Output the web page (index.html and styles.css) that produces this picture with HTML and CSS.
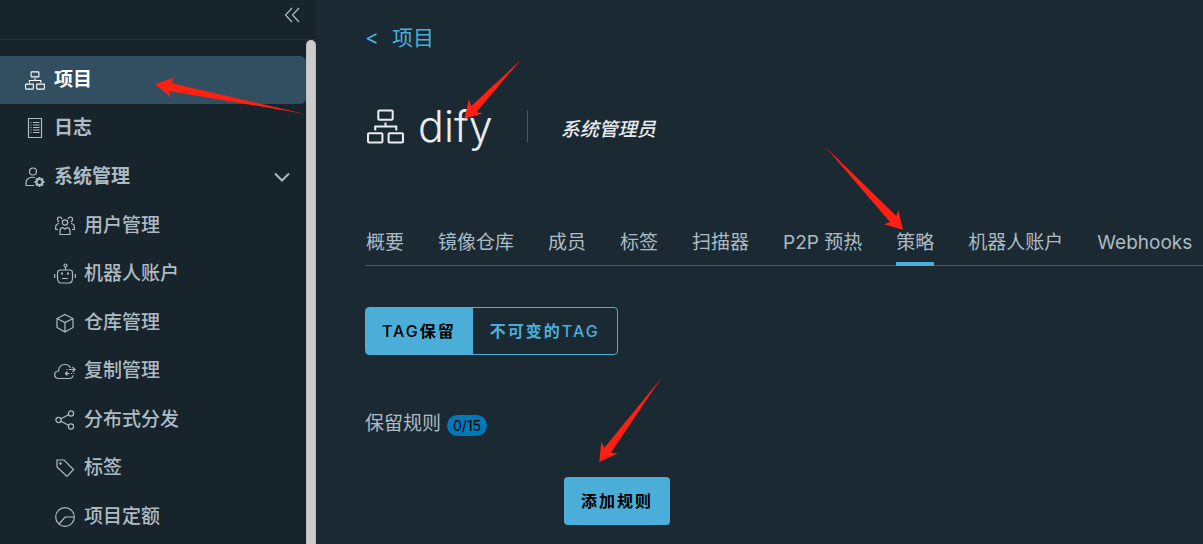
FILE: index.html
```html
<!DOCTYPE html>
<html lang="zh-CN">
<head>
<meta charset="utf-8">
<title>dify - 策略</title>
<link rel="stylesheet" href="styles.css">
</head>
<body>
<svg class="sprite" aria-hidden="true">
  <symbol id="project" viewBox="0 0 36 34">
    <path d="M12 1.5h12a1 1 0 0 1 1 1v7a1 1 0 0 1-1 1H12a1 1 0 0 1-1-1v-7a1 1 0 0 1 1-1zM2 23.500h12a1 1 0 0 1 1 1v7a1 1 0 0 1-1 1H2a1 1 0 0 1-1-1v-7a1 1 0 0 1 1-1zM22 23.500h12a1 1 0 0 1 1 1v7a1 1 0 0 1-1 1H22a1 1 0 0 1-1-1v-7a1 1 0 0 1 1-1zM18 13v4M8 21v-4h20.500v4"/>
  </symbol>
</svg>
<div class="app">
  <aside class="sidebar">
    <div class="sidebar-head">
      <button class="collapse" aria-label="收起"><svg width="16" height="16" viewBox="0 0 16 16"><path d="M8 1 1.500 8 8 15M15 1 8.500 8 15 15"/></svg></button>
    </div>
    <div class="sidebar-body">
      <nav class="nav">
        <a class="item active" href="#"><svg class="icon small-project"><use href="#project"/></svg>项目</a>
        <a class="item" href="#"><svg class="icon" viewBox="0 0 20 20"><path d="M3.500 .5h13v19h-13z"/><path d="M5.500 4.500h1M8 4.500h6.500M5.500 7h1M8 7h6.500M5.500 9.500h1M8 9.500h6.500M5.500 12h1M8 12h6.500M5.500 14.500h1M8 14.500h6.500"/></svg>日志</a>
        <button class="item" aria-expanded="true"><svg class="icon" viewBox="0 0 20 20"><circle cx="8" cy="4.500" r="3.500"/><path d="M10 10.500C5 9.500 1 12 1 15.500V18.500H9"/><circle cx="14.500" cy="15" r="3" stroke-width="2"/><path d="M14.500 10v2M14.500 18v2M9.500 15h2M17.500 15h2M11 11.500l1.400 1.400M16.600 17.100l1.400 1.400M18 11.500l-1.400 1.400M12.400 17.100 11 18.500" stroke-width="2"/></svg>系统管理<svg class="chevron" width="16" height="10" viewBox="0 0 16 10"><path d="M1 1.500l7 7 7-7"/></svg></button>
        <div class="sub">
          <a class="item" href="#"><svg class="icon" viewBox="0 0 20 20"><circle cx="10" cy="6.500" r="2.700"/><path d="M5 18.500v-3.500q0-3 2.500-3.500L10 13l2.500-1.500q2.500.5 2.500 3.500v3.500zM7 3Q6.500 1 4.500 1 2.500 1 2.500 3.500 2.500 5 4 6M13 3Q13.500 1 15.500 1 17.500 1 17.500 3.500 17.500 5 16 6M4 7.500Q.7 8 .7 11v2.500H3M16 7.500Q19.300 8 19.300 11v2.500H17"/></svg>用户管理</a>
          <a class="item" href="#"><svg class="icon wide" viewBox="0 0 22 22"><circle cx="11.500" cy="2.500" r="1.500"/><path d="M11.500 4v3M6.500 7h9.500q2.500 0 2.500 3v5q0 5-3.500 5H7.500Q3.500 20 3.500 15v-5q0-3 3-3zM.7 11v4M21.300 11v4M8 15.500h6"/><path d="M7 10.500h2M13 10.500h2" stroke-width="2"/></svg>机器人账户</a>
          <a class="item" href="#"><svg class="icon" viewBox="0 0 20 20"><path d="M10 1.500 18 5.500v9L10 19l-8-4.500v-9zM2 5.500l8 4 8-4M10 9.500V19"/></svg>仓库管理</a>
          <a class="item" href="#"><svg class="icon wide" viewBox="0 0 22 22"><path d="M19 15.500q-.5 3-4 3H4Q.7 18 .7 14.500 .7 11.500 4.500 11 5 4.500 11 4.500q4 0 5.500 3.500M12.500 9.500h1M15 9.500h6M18.500 7l2.500 2.500-2.500 2.500M11.500 13.500h4M17 13.500h1M19.500 13.500h1M13.500 11.500l-2 2 2 2"/></svg>复制管理</a>
          <a class="item" href="#"><svg class="icon" viewBox="0 0 20 20"><circle cx="3.500" cy="10" r="2.600"/><circle cx="16" cy="3.500" r="2.600"/><circle cx="16" cy="16.500" r="2.600"/><path d="M6 8.800l7.500-4M6 11.200l7.500 4"/></svg>分布式分发</a>
          <a class="item" href="#"><svg class="icon" viewBox="0 0 20 20"><path d="M2 2h7l9.500 9.500-6.500 7L2 9z"/><circle cx="5.500" cy="5.500" r=".7"/></svg>标签</a>
          <a class="item" href="#"><svg class="icon" viewBox="0 0 20 20"><circle cx="10" cy="10" r="9.300"/><path d="M19 10h-9L4 17"/></svg>项目定额</a>
        </div>
      </nav>
      <div class="scrollbar"></div>
    </div>
  </aside>
  <main class="main">
    <a class="back" href="#"><span>&lt;</span><span>项目</span></a>
    <header class="title">
      <svg class="title-icon"><use href="#project"/></svg>
      <h1>dify</h1>
      <em class="role">系统管理员</em>
    </header>
    <nav class="tabs">
      <a href="#">概要</a><a href="#">镜像仓库</a><a href="#">成员</a><a href="#">标签</a><a href="#">扫描器</a><a href="#">P2P 预热</a><a class="current" href="#">策略</a><a href="#">机器人账户</a><a href="#">Webhooks</a>
    </nav>
    <div class="group"><button class="on"><span class="latin">TAG</span>保留</button><button>不可变的<span class="latin">TAG</span></button></div>
    <div class="rules"><span>保留规则</span><span class="badge">0/15</span></div>
    <button class="add">添加规则</button>
  </main>
</div>
<svg class="arrows" aria-hidden="true">
  <path d="M155 84 174.700 77.500 170.700 83 304 113.700 168.700 91 170.700 97.300z"/>
  <path d="M464.300 118.700 469 99.300 471.300 106 520.700 60 476.300 112.300 483.300 113.300z"/>
  <path d="M903 229.700 898.300 210.300 896.300 216 825.700 147.300 890 222 884 224.300z"/>
  <path d="M599.300 462 601.300 441.700 604.300 448 661.300 378 610.700 453 618 453.300z"/>
</svg>
</body>
</html>
```
FILE: styles.css
```css
* { box-sizing: border-box; }
body {
  margin: 0;
  background: #1b2a32;
  color: #adbbc4;
  font-family: Inter, "Noto Sans CJK SC", sans-serif;
  font-size: 19px;
  line-height: 24px;
}
a { color: inherit; text-decoration: none; }
button { font: inherit; color: inherit; background: none; border: 0; padding: 0; cursor: pointer; }
svg { fill: none; stroke: currentColor; flex: none; }
.sprite { position: absolute; width: 0; height: 0; }
.app { display: flex; height: 100vh; overflow: hidden; }

.sidebar { width: 316px; flex: none; display: flex; flex-direction: column; background: #18242b; }
.sidebar-head {
  height: 40px;
  flex: none;
  display: flex;
  justify-content: flex-end;
  align-items: flex-start;
  padding: 7px 16px;
  border-bottom: 1px solid #23323a;
}
.collapse { display: flex; }
.collapse svg { stroke-width: 1.2; }
.sidebar-body { flex: 1; min-height: 0; display: flex; }
.nav { flex: 1; padding-top: 16px; overflow: hidden; }
.scrollbar { width: 10px; background: #cbcbcb; border: 1px solid #bdbdbd; border-width: 0 1px; border-radius: 5px 5px 0 0; }
.item {
  display: flex;
  align-items: center;
  gap: 9px;
  width: 100%;
  height: 48px;
  padding: 0 16px 0 25px;
  font-weight: 700;
  text-align: left;
}
.item.active { background: #324f62; color: #fff; border-radius: 0 6px 6px 0; }
button.item { margin-top: 1px; }
.icon { width: 20px; height: 20px; stroke-width: 1.2; }
.small-project { height: 19px; stroke-width: 2; }
.chevron { margin-left: auto; stroke-width: 2; }
.sub .item { padding-left: 55px; font-weight: 500; }
.sub .item:nth-child(odd) { margin-top: 1px; }
.icon.wide { width: 22px; height: 22px; margin: 0 -1px; }

.main { flex: 1; min-width: 0; padding: 26px 0 0 49px; overflow: hidden; }
.back { display: flex; gap: 13px; width: max-content; color: #4aaed9; font-size: 21px; }
.title { display: flex; align-items: center; height: 48px; margin-top: 52px; color: #e9ecef; }
.title-icon { width: 37px; height: 35px; margin: 0 14px 0 2px; stroke-width: 2; }
h1 { margin: 0; font-size: 43px; font-weight: 300; line-height: 48px; }
.role { margin-left: 34px; padding: 8px 0 0 33px; border-left: 1px solid #495865; font-weight: 500; line-height: 24px; }
.tabs { display: flex; gap: 34px; margin-top: 76px; padding-left: 1px; height: 40px; box-shadow: inset 0 -1px #495865; white-space: nowrap; }
.tabs a { flex: none; padding-top: 5px; border-bottom: 4px solid transparent; }
.tabs .current { border-color: #4aaed9; }
.group { display: flex; width: max-content; margin-top: 41px; border: 1px solid #4aaed9; border-radius: 4px; color: #4aaed9; }
.group button, .add { height: 46px; padding: 0 17px; font-size: 16px; font-weight: 600; letter-spacing: 2px; }
.group .on { padding-left: 16px; background: #4aaed9; color: #000; }
.latin { font-weight: 500; }
.rules { display: flex; align-items: center; gap: 6px; margin-top: 57px; }
.badge { padding: 0 6px; border-radius: 11px; background: #0079b8; color: #000; font-size: 14px; line-height: 21px; margin-top: 3px; }
.group + .rules + .add { display: block; height: 48px; margin: 41px 0 0 199px; background: #4aaed9; color: #000; border-radius: 4px; }

.arrows { position: absolute; top: 0; left: 0; width: 100%; height: 100%; pointer-events: none; }
.arrows path { fill: #ff2012; stroke: none; }
```
